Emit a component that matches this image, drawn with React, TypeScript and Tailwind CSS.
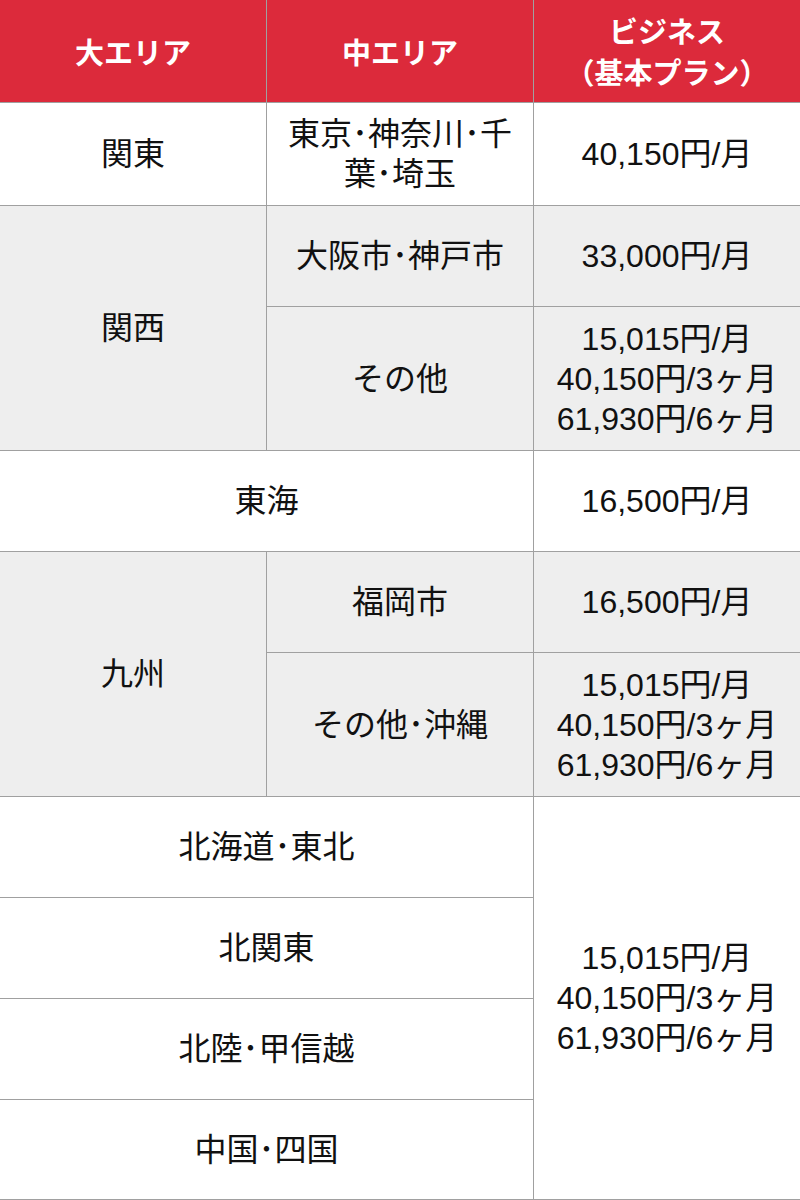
const body = "font-['Liberation_Sans','Noto_Sans_CJK_JP',sans-serif] text-[32px] leading-[40px] text-[#111]";

function Cell({
  className = "",
  gray = false,
  children,
}: {
  className?: string;
  gray?: boolean;
  children: React.ReactNode;
}) {
  return (
    <div
      className={`${gray ? "bg-[#eeeeee]" : "bg-white"} flex items-center justify-center text-center px-4 ${className}`}
    >
      {children}
    </div>
  );
}

function Price3() {
  return (
    <span>
      15,015円/月
      <br />
      40,150円/3ヶ月
      <br />
      61,930円/6ヶ月
    </span>
  );
}

export default function App() {
  return (
    <div className="w-[800px] h-[1200px] bg-white">
      <div
        className={`grid grid-cols-[266px_266px_266px] grid-rows-[102px_102px_100px_143px_100px_100px_143px_100px_100px_100px_99px] gap-px bg-[#a0a0a0] pb-px ${body}`}
      >
        {/* header */}
        <div className="bg-[#dc2a3b] flex items-center justify-center text-white font-bold text-[29px] font-['Noto_Sans_CJK_JP',sans-serif]">
          大エリア
        </div>
        <div className="bg-[#dc2a3b] flex items-center justify-center text-white font-bold text-[29px] font-['Noto_Sans_CJK_JP',sans-serif]">
          中エリア
        </div>
        <div className="bg-[#dc2a3b] flex items-center justify-center text-center text-white font-bold text-[29px] leading-[41px] font-['Noto_Sans_CJK_JP',sans-serif]">
          <span>
            ビジネス
            <br />
            （基本プラン）
          </span>
        </div>

        {/* 関東 */}
        <Cell>関東</Cell>
        <Cell>
          <span>
            東京･神奈川･千
            <br />
            葉･埼玉
          </span>
        </Cell>
        <Cell>40,150円/月</Cell>

        {/* 関西 */}
        <Cell gray className="row-span-2">関西</Cell>
        <Cell gray>大阪市･神戸市</Cell>
        <Cell gray>33,000円/月</Cell>
        <Cell gray>その他</Cell>
        <Cell gray>
          <Price3 />
        </Cell>

        {/* 東海 */}
        <Cell className="col-span-2">東海</Cell>
        <Cell>16,500円/月</Cell>

        {/* 九州 */}
        <Cell gray className="row-span-2">九州</Cell>
        <Cell gray>福岡市</Cell>
        <Cell gray>16,500円/月</Cell>
        <Cell gray>その他･沖縄</Cell>
        <Cell gray>
          <Price3 />
        </Cell>

        {/* その他エリア */}
        <Cell className="col-span-2">北海道･東北</Cell>
        <Cell className="row-span-4">
          <Price3 />
        </Cell>
        <Cell className="col-span-2">北関東</Cell>
        <Cell className="col-span-2">北陸･甲信越</Cell>
        <Cell className="col-span-2">中国･四国</Cell>
      </div>
    </div>
  );
}
